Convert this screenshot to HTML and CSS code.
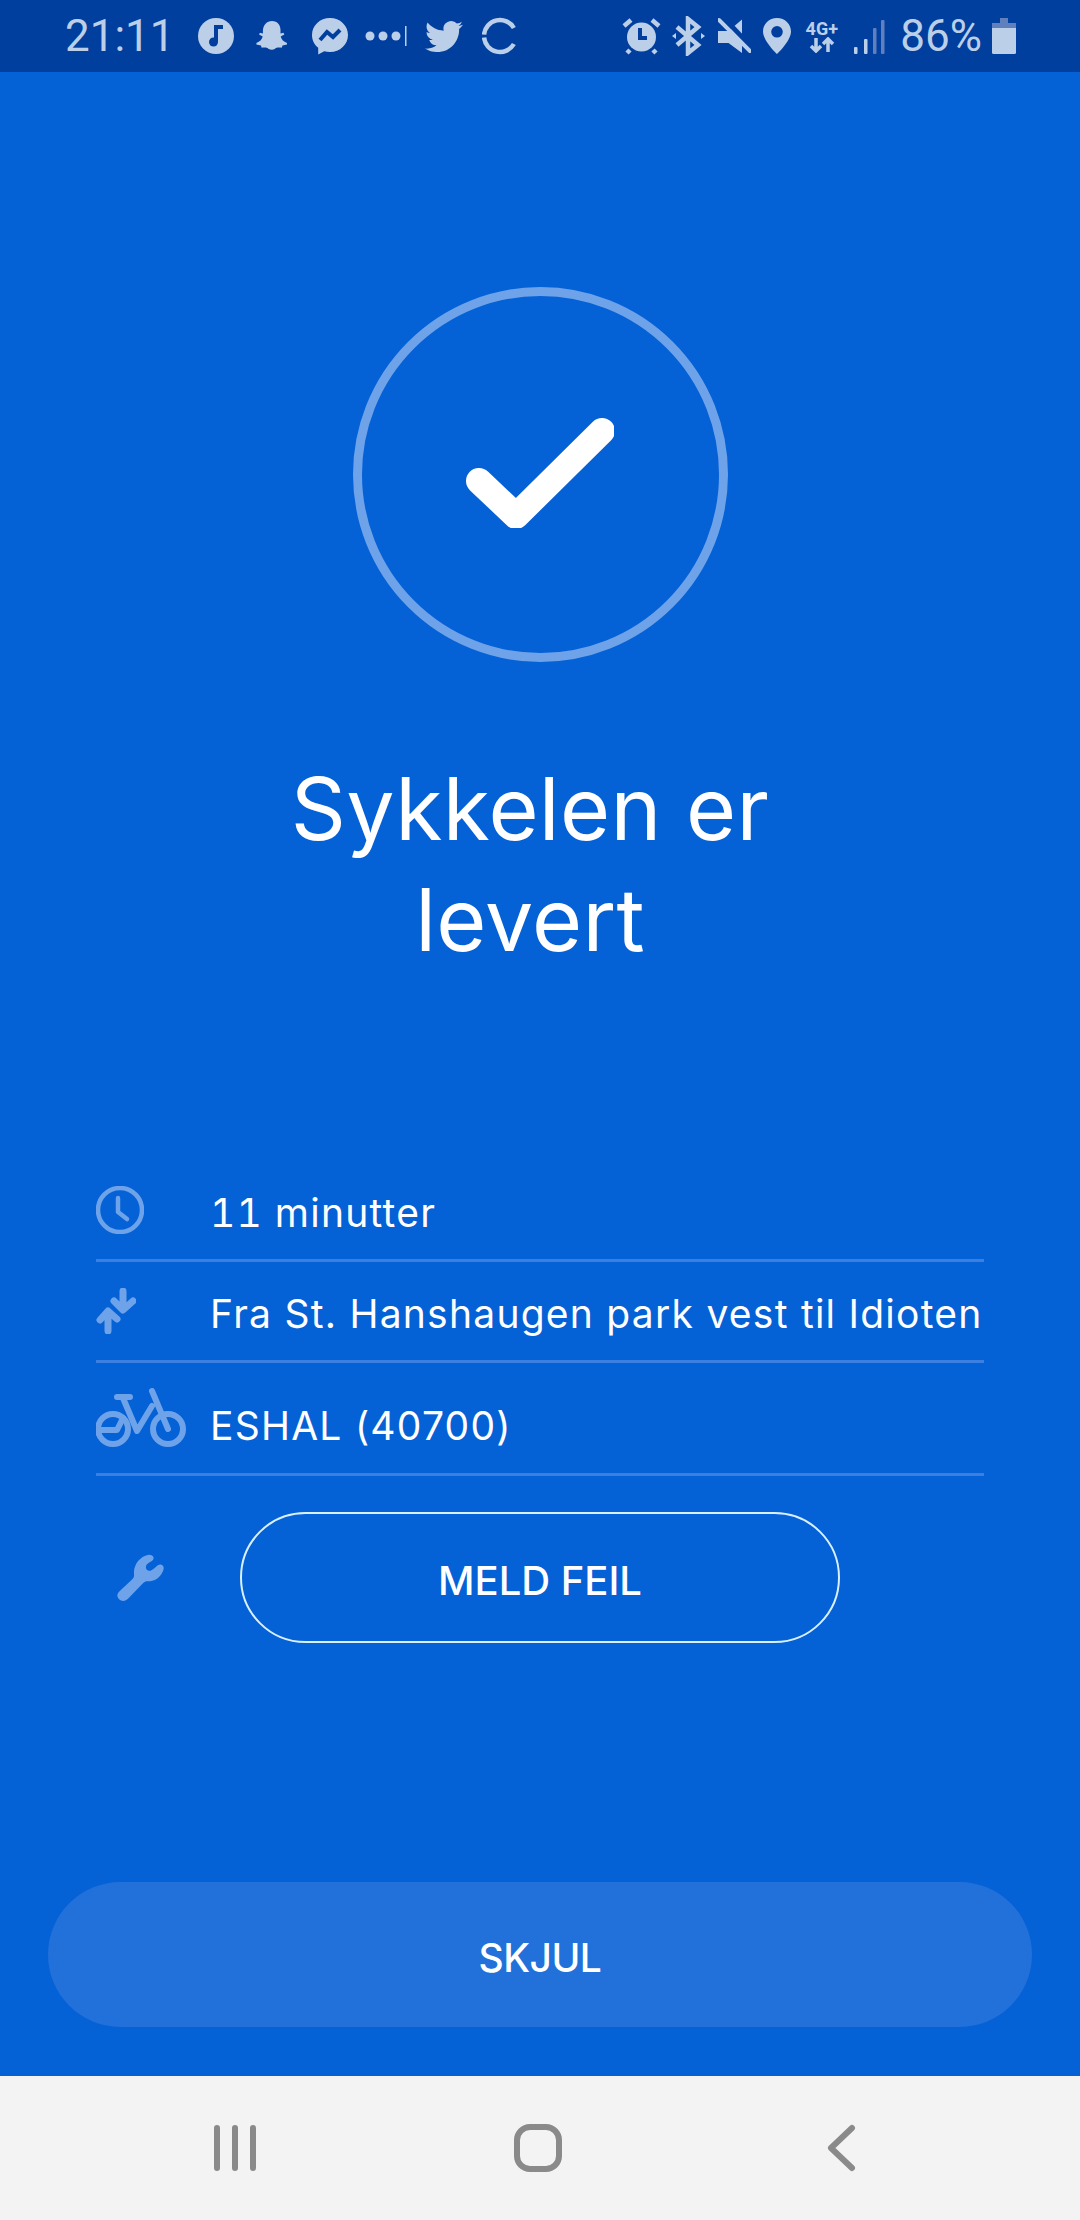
FILE: index.html
```html
<!DOCTYPE html>
<html lang="en">
<head>
    <meta charset="UTF-8">
    <title>Sykkelen er levert</title>
    <link rel="stylesheet" href="styles.css">
</head>
<body>

    <div class="screen">

        <!-- Status bar -->
        <div class="status-bar">
            <div class="status-group">
                <span class="status-text">21:11</span>
                <svg class="status-icon music" width="36" height="40" viewBox="0 0 36 40">
                    <circle cx="18" cy="20" r="18" class="fill"/>
                    <circle cx="15.5" cy="26" r="4.5" class="cut"/>
                    <path d="M18 26V11h7" class="cut-line"/>
                </svg>
                <svg class="status-icon snap" width="32" height="40" viewBox="0 0 32 40">
                    <path class="fill" d="M16 5c5.500 0 8.500 4 8.500 9v3.500l3-.8.800 1.800-3.600 2c.6 3 3 5.200 6.300 6.500v1.500l-4.500 1-.8 2.200c-3-.5-5.500-.3-7 1.300-1.500 1-4 1-6 0-1.500-1.600-4-1.800-7-1.300l-.8-2.200-4.500-1v-1.500c3.300-1.300 5.700-3.500 6.300-6.500l-3.600-2 .8-1.800 3 .8V14C7.500 9 10.500 5 16 5z"/>
                </svg>
                <svg class="status-icon messenger" width="36" height="40" viewBox="0 0 36 40">
                    <path class="fill" d="M18 2C8 2 0 9.500 0 19c0 5.200 2.300 9.700 6.200 12.800V38.500l6-3.300c1.800.5 3.800.8 5.800.8 10 0 18-7.500 18-17S28 2 18 2z"/>
                    <path class="cut-line" d="M8 24l7-8 6 5 7-7"/>
                </svg>
                <svg class="status-icon more" width="42" height="40" viewBox="0 0 42 40">
                    <circle class="fill" cx="5" cy="20" r="4.500"/>
                    <circle class="fill" cx="18" cy="20" r="4.500"/>
                    <circle class="fill" cx="31" cy="20" r="4.500"/>
                    <rect class="fill" x="40" y="10" width="1.500" height="20"/>
                </svg>
                <svg class="status-icon twitter" width="38" height="40" viewBox="0 0 24 25.260">
                    <path class="fill" transform="translate(0 1)" d="M23.953 4.570a10 10 0 01-2.825.775 4.958 4.958 0 002.163-2.723c-.951.555-2.005.959-3.127 1.184a4.920 4.920 0 00-8.384 4.482C7.690 8.095 4.067 6.130 1.640 3.162a4.822 4.822 0 00-.666 2.475c0 1.710.870 3.213 2.188 4.096a4.904 4.904 0 01-2.228-.616v.060a4.923 4.923 0 003.946 4.827 4.996 4.996 0 01-2.212.085 4.936 4.936 0 004.604 3.417 9.867 9.867 0 01-6.102 2.105c-.390 0-.779-.023-1.170-.067a13.995 13.995 0 007.557 2.209c9.053 0 13.998-7.496 13.998-13.985 0-.210 0-.420-.015-.630A9.935 9.935 0 0024 4.590z"/>
                </svg>
                <svg class="status-icon sync" width="36" height="40" viewBox="0 0 36 40">
                    <path class="line" d="M31.860 12A16 16 0 0 0 2.060 18.600"/>
                    <path class="line" d="M2.060 21.500A16 16 0 0 0 31.860 28"/>
                </svg>
            </div>
            <div class="status-group">
                <svg class="status-icon alarm" width="39" height="40" viewBox="0 0 39 40">
                    <circle class="fill" cx="19.500" cy="21" r="14.500"/>
                    <path class="line" d="M2 10l7-6M37 10l-7-6M5 37l3-3M34 37l-3-3"/>
                    <path class="cut-line" d="M18 12v10h7"/>
                </svg>
                <svg class="status-icon bluetooth" width="33" height="40" viewBox="0 0 33 40">
                    <path class="line" d="M5 11l21 18-10 8V3l10 8L5 29"/>
                    <path class="fill" d="M0 20l4-3v6zM33 20l-4-3v6z"/>
                </svg>
                <svg class="status-icon mute" width="33" height="40" viewBox="0 0 33 40">
                    <path class="fill" d="M0 15h10.500L24 3.500V37L10.500 27H0z"/>
                    <path class="slash-cut" d="M4 0l31 33"/>
                    <path class="line slash" d="M1 4l31 31"/>
                </svg>
                <svg class="status-icon pin" width="28" height="40" viewBox="0 0 28 40">
                    <path class="fill" fill-rule="evenodd" d="M14 2C6 2 0 8 0 15.500 0 25 14 38 14 38s14-13 14-22.500C28 8 22 2 14 2zm0 8a5.800 5.800 0 1 1 0 11.600A5.800 5.800 0 0 1 14 10z"/>
                </svg>
                <div class="network">
                    <span class="network-label">4G+</span>
                    <svg width="26" height="16" viewBox="0 0 26 16">
                        <path class="line thin" d="M7 1v13M2 9l5 5 5-5M19 15V2M14 7l5-5 5 5"/>
                    </svg>
                </div>
                <svg class="status-icon signal" width="31" height="40" viewBox="0 0 31 40">
                    <rect class="fill" x="0" y="31" width="3.500" height="7" rx="1"/>
                    <rect class="fill" x="10" y="23" width="3.500" height="15" rx="1"/>
                    <rect class="dim" x="19" y="12" width="3.500" height="26" rx="1"/>
                    <rect class="dim" x="27" y="4" width="3.500" height="34" rx="1"/>
                </svg>
                <span class="status-text percent">86%</span>
                <svg class="status-icon battery" width="24" height="40" viewBox="0 0 24 40">
                    <path class="dim" d="M8 2h8v5h8v5H0V7h8z"/>
                    <path class="fill" d="M0 12h24v24.500a1.500 1.500 0 0 1-1.500 1.500h-21A1.500 1.500 0 0 1 0 36.500z"/>
                </svg>
            </div>
        </div>

        <div class="main">
            <div class="done-circle">
                <svg width="148" height="112" viewBox="0 0 148 112">
                    <path d="M13 65l37 35 86-85" class="check"/>
                </svg>
            </div>

            <h1 class="title">Sykkelen er<br>levert</h1>

            <!-- Trip details -->
            <div class="details">
                <div class="detail-row">
                    <div class="detail-icon">
                        <svg width="48" height="48" viewBox="0 0 48 48">
                            <circle cx="24" cy="24" r="22" class="icon-line"/>
                            <path d="M22 12v14l9 7" class="icon-line"/>
                        </svg>
                    </div>
                    <span class="detail-text duration">11 minutter</span>
                </div>
                <div class="detail-row">
                    <div class="detail-icon">
                        <svg width="40" height="46" viewBox="0 0 40 46">
                            <path d="M27 3v18M18 13l9 9 10-9M12 43V24M4 32l8-9 9 8" class="icon-line heavy"/>
                        </svg>
                    </div>
                    <span class="detail-text">Fra St. Hanshaugen park vest til Idioten</span>
                </div>
                <div class="detail-row last">
                    <div class="detail-icon">
                        <svg width="90" height="60" viewBox="0 0 90 60">
                            <circle cx="17" cy="41" r="15" class="icon-line bold"/>
                            <circle cx="72" cy="41" r="15" class="icon-line bold"/>
                            <path d="M21 9h13M27 10l14 33 15-25M56 3l16 38M4 42h17l6-12" class="icon-line bold"/>
                        </svg>
                    </div>
                    <span class="detail-text">ESHAL (40700)</span>
                </div>
            </div>

            <div class="report-row">
                <svg class="wrench" width="48" height="48" viewBox="0 0 48 48">
                    <path class="wrench-shape" d="M31 1c2.500-.5 5 .5 5.500 2.500.4 1.800-.8 3-3.500 4.500-3 1.800-4.500 3.500-4 6 .5 2.600 2.800 3.400 5.500 2.200 2.800-1.300 4.300-3.600 6.300-5 1.800-1.200 4-1 5.300.8 1.300 2 .3 5-1.800 8.200-3 4.500-7.500 7-12.800 7-2.400 0-3.900.4-5.300 1.800L12 43.800c-2.500 3-5.500 4-8.500 2.500-3.500-2-4.200-5.500-1.500-8.500l13-12.300c1.800-1.800 2.300-3.300 2-5.800-.8-8.500 6-17.400 14-18.700z"/>
                </svg>
                <button class="btn-outline">MELD FEIL</button>
            </div>

            <button class="btn-hide">SKJUL</button>
        </div>

        <!-- Android nav bar -->
        <div class="nav-bar">
            <svg width="46" height="48" viewBox="0 0 46 48">
                <path d="M5 4v40M23 4v40M41 4v40" class="nav-line"/>
            </svg>
            <svg class="nav-home" width="50" height="50" viewBox="0 0 50 50">
                <rect x="4" y="4" width="42" height="42" rx="13" class="nav-line"/>
            </svg>
            <svg class="nav-back" width="32" height="50" viewBox="0 0 32 50">
                <path d="M28 5L7 25l21 20" class="nav-line"/>
            </svg>
        </div>
    </div>

</body>
</html>
```

FILE: styles.css
```css
* {
    box-sizing: border-box;
}

body {
    margin: 0;
    font-family: Inter, "Liberation Sans", sans-serif;
    background-color: #0561d6;
}

.screen {
    width: 1080px;
    height: 2220px;
    display: flex;
    flex-direction: column;
    overflow: hidden;
}

/* Status bar */
.status-bar {
    height: 72px;
    flex: none;
    background-color: #003f9e;
    color: #bccfe9;
    display: flex;
    justify-content: space-between;
    align-items: center;
    padding: 0 64px 0 65px;
}

.status-group {
    display: flex;
    align-items: center;
}

.status-text {
    font-family: Roboto, sans-serif;
    font-size: 44px;
    line-height: 40px;
}

.status-icon {
    display: block;
}

.fill {
    fill: #bccfe9;
}

.dim {
    fill: #5f80bd;
}

.cut {
    fill: #003f9e;
}

.cut-line {
    fill: none;
    stroke: #003f9e;
    stroke-width: 4;
}

.line {
    fill: none;
    stroke: #bccfe9;
    stroke-width: 4.500;
}

.line.thin {
    stroke-width: 3.500;
}

.line.slash {
    stroke-width: 4;
    stroke-linecap: round;
}

.slash-cut {
    fill: none;
    stroke: #003f9e;
    stroke-width: 5;
}

.music {
    margin-left: 23px;
}

.snap {
    margin-left: 22px;
}

.messenger {
    margin-left: 24px;
}

.more {
    margin-left: 17px;
}

.twitter {
    margin-left: 18px;
}

.sync {
    margin-left: 19px;
}

.bluetooth {
    margin-left: 11px;
}

.mute {
    margin-left: 13px;
}

.pin {
    margin-left: 12px;
}

.network {
    margin-left: 13px;
    width: 35px;
    display: flex;
    flex-direction: column;
    align-items: center;
}

.network-label {
    font-family: Roboto, sans-serif;
    font-weight: 700;
    font-size: 18px;
    line-height: 17px;
}

.signal {
    margin-left: 15px;
}

.percent {
    margin-left: 15px;
}

.battery {
    margin-left: 10px;
}

/* Main content */
.main {
    flex: 1;
    display: flex;
    flex-direction: column;
    align-items: center;
}

.done-circle {
    width: 375px;
    height: 375px;
    margin-top: 215px;
    border: 9px solid #6ea3ea;
    border-radius: 50%;
    display: flex;
    justify-content: center;
    align-items: center;
    padding: 0 0 6px 0;
}

.check {
    fill: none;
    stroke: #fff;
    stroke-width: 26;
    stroke-linecap: round;
    stroke-linejoin: round;
}

.title {
    margin: 92px 0 0;
    padding-right: 20px;
    font-weight: 400;
    font-size: 86px;
    line-height: 111px;
    letter-spacing: .3px;
    text-align: center;
    color: #fff;
}

.details {
    width: 888px;
    margin-top: 185px;
}

.detail-row {
    height: 101px;
    display: flex;
    align-items: center;
    border-bottom: 3px solid #3b80e0;
    color: #fff;
}

.detail-row.last {
    height: 113px;
}

.detail-icon {
    width: 114px;
    flex: none;
    display: flex;
}

.detail-icon svg {
    display: block;
}

.detail-text {
    margin-top: 6px;
    font-size: 39px;
    line-height: 50px;
    letter-spacing: 1.250px;
    white-space: nowrap;
}

.detail-text.duration {
    font-variant-numeric: tabular-nums;
}

.detail-row.last .detail-text {
    margin-top: 16px;
}

.icon-line {
    fill: none;
    stroke: #6ea3ea;
    stroke-width: 4.500;
    stroke-linecap: round;
    stroke-linejoin: round;
}

.icon-line.heavy {
    stroke-width: 7;
}

.icon-line.bold {
    stroke-width: 6;
}

.report-row {
    width: 888px;
    margin-top: 36px;
    display: flex;
    align-items: center;
}

.wrench {
    margin-left: 21px;
    margin-right: 75px;
    flex: none;
}

.wrench-shape {
    fill: #6ea3ea;
}

.btn-outline {
    width: 600px;
    height: 131px;
    padding-top: 6px;
    background: none;
    border: 2px solid #d8f0ff;
    border-radius: 66px;
    color: #fff;
    font-family: Inter, sans-serif;
    font-weight: 500;
    font-size: 40px;
}

.btn-hide {
    width: 984px;
    height: 145px;
    margin-top: 239px;
    padding-top: 6px;
    background-color: #2271da;
    border: none;
    border-radius: 73px;
    color: #fff;
    font-family: Inter, sans-serif;
    font-weight: 500;
    font-size: 39px;
    letter-spacing: -.5px;
}

/* Nav bar */
.nav-bar {
    height: 144px;
    flex: none;
    background-color: #f3f3f3;
    display: flex;
    align-items: center;
    padding: 0 0 0 212px;
}

.nav-line {
    fill: none;
    stroke: #8a8a8a;
    stroke-width: 6;
    stroke-linecap: round;
    stroke-linejoin: round;
}

.nav-home {
    margin-left: 255px;
}

.nav-back {
    margin-left: 261px;
}
```
